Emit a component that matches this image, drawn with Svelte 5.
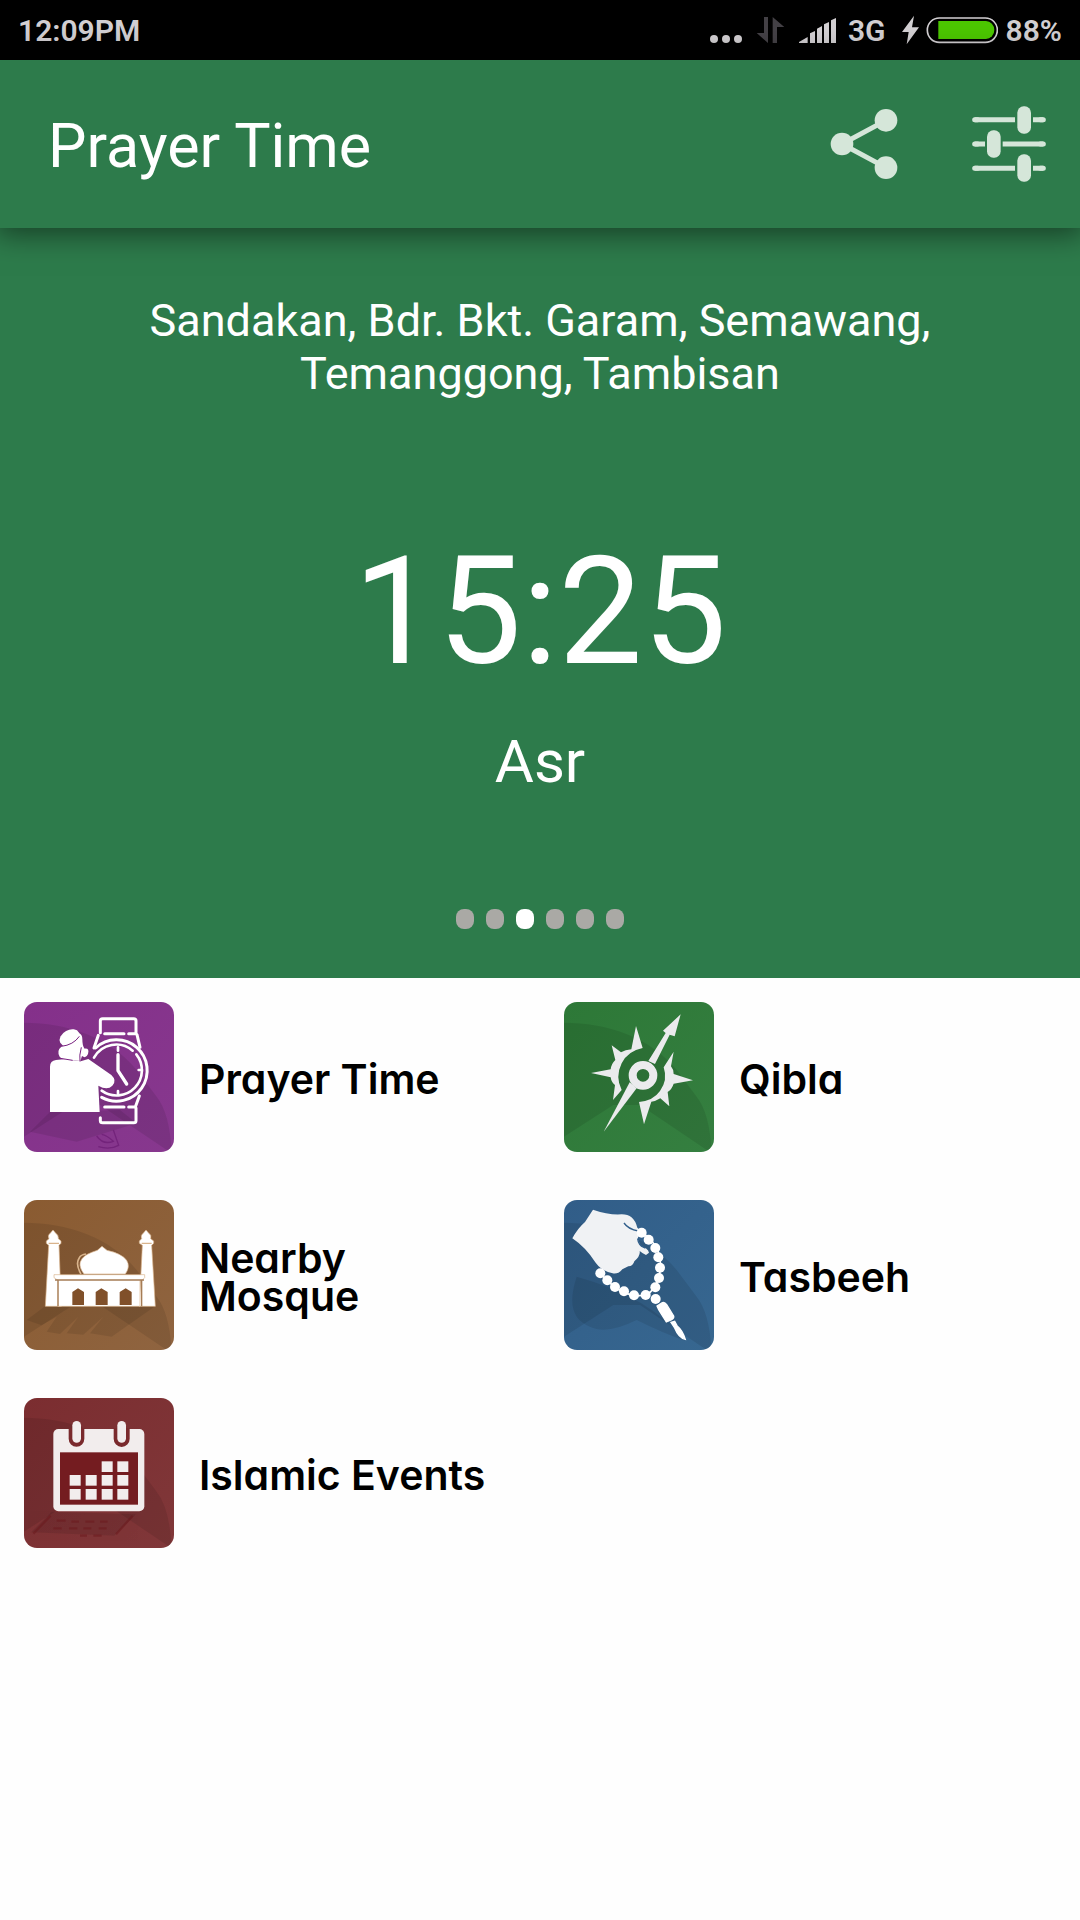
<script>
  const location = "Sandakan, Bdr. Bkt. Garam, Semawang, Temanggong, Tambisan";
  const prayers = ["Imsak", "Dhuhr", "Asr", "Maghrib", "Isha", "Fajr"];
  let current = 2;

  const menu = [
    { id: "prayer", label: "Prayer Time", box: "42 36 450 450" },
    { id: "qibla", label: "Qibla", box: "42 36 450 450" },
    { id: "mosque", label: "Nearby Mosque", box: "42 30 450 450" },
    { id: "tasbeeh", label: "Tasbeeh", box: "42 30 450 450" },
    { id: "events", label: "Islamic Events", box: "42 39 450 450" },
  ];

  // centre points of the beads on the tasbeeh string
  const beads = [
    [275, 128], [296, 149], [316, 174], [325, 202], [330, 233], [327, 264],
    [316, 292], [287, 315], [252, 316], [222, 304], [195, 291], [172, 271],
    [151, 250], [317, 327],
  ];

  // filled days of the calendar
  const days = [
    [275, 229], [322, 229],
    [179, 270], [227, 270], [275, 270], [322, 270],
    [179, 312], [227, 312], [275, 312], [322, 312],
  ];
</script>

<div class="status-bar">
  <span>12:09PM</span>
  <div class="status-right">
    <svg class="network" viewBox="63 0 378 180" aria-hidden="true">
      <g fill="#d3d0d3">
        <circle cx="75" cy="117" r="12" />
        <circle cx="111" cy="117" r="12" />
        <circle cx="147" cy="117" r="12" />
        <path d="M330 129V126L356 111V129Z M363 129V100L378 93V129Z M384 129V86L399 78V129Z M405 129V73L420 66V129Z M426 129V61L441 54V129Z" />
      </g>
      <path fill="#444146" d="M225 51H237V129L203 99H225Z M251 129V51L286 81H264V129Z" />
    </svg>
    <span>3G</span>
    <svg class="battery" viewBox="641 0 288 180" aria-hidden="true">
      <path fill="#d3d0d3" d="M677 47L641 96H661L655 133L692 82H671Z" />
      <rect x="717" y="54" width="210" height="73" rx="36" fill="none" stroke="#d3d0d3" stroke-width="5" />
      <path fill="#4cc700" d="M750 63H893A25 27 0 0 1 893 117H750Z" />
    </svg>
    <span>88%</span>
  </div>
</div>

<header>
  <h1>Prayer Time</h1>
  <div class="actions">
    <button aria-label="Share">
      <svg viewBox="414 324 216 216">
        <path d="M588 361L456 432L588 503" fill="none" stroke="#d5e6d9" stroke-width="15" />
        <g fill="#d5e6d9">
          <circle cx="588" cy="361" r="34" />
          <circle cx="456" cy="432" r="34" />
          <circle cx="588" cy="503" r="34" />
        </g>
      </svg>
    </button>
    <button aria-label="Settings">
      <svg class="wide" viewBox="843 318 222 228">
        <path d="M851 359H972M1026 359H1057M851 432H882M935 432H1057M851 505H972M1026 505H1057" stroke="#d5e6d9" stroke-width="15" />
        <path d="M851 359H860M1048 359H1057M851 432H860M1048 432H1057M851 505H860M1048 505H1057" stroke="#d5e6d9" stroke-width="15" stroke-linecap="round" />
        <g fill="#d5e6d9">
          <rect x="979" y="319" width="41" height="82" rx="19" />
          <rect x="888" y="391" width="41" height="82" rx="19" />
          <rect x="979" y="463" width="41" height="82" rx="19" />
        </g>
      </svg>
    </button>
  </div>
</header>

<section class="hero">
  <p class="location">{location}</p>
  <div class="time">15:25</div>
  <div class="name">Asr</div>
  <div class="dots">
    {#each prayers as prayer, i}
      <button
        class:active={i === current}
        aria-label={prayer}
        on:click={() => {
          current = i;
        }}
      ></button>
    {/each}
  </div>
</section>

<nav>
  {#each menu as item}
    <a href="#{item.id}" class={item.id}>
      <svg class="tile" viewBox={item.box} aria-hidden="true">
        <!-- glossy background -->
        <path class="shade" d="M42 98C170 98 300 140 380 240L440 320Q480 370 485 490L270 345L190 345L42 440Z" />

        {#if item.id === "prayer"}
          <path class="shade" d="M120 366L60 425L200 455L380 400L330 360Z" />
          <g fill="none" stroke="#fff" stroke-width="9" stroke-linecap="round" stroke-linejoin="round">
            <path d="M271 128V92Q271 86 278 86H371Q378 86 378 92V128M284 131H342M356 131H379M265 136L252 174M381 134L390 172" />
            <path d="M271 383V392Q271 398 278 398H371Q378 398 378 392V354M284 351H342M356 351H376L388 318" />
            <path d="M257 174A92 92 0 1 1 275 322" />
            <path d="M252 203A76 76 0 0 1 368 182M379 193A76 76 0 0 1 275 302" stroke-width="8" />
            <path d="M324 172V182M324 303V313M386 240H396" stroke-width="8" />
            <path d="M324 194V242L350 282" stroke-width="10" />
          </g>
          <g fill="#fff">
            <path d="M120 366V230Q120 212 138 210L160 208L188 211L212 214L235 207L304 255Q322 272 307 287Q292 302 265 287L269 366Z" />
            <path d="M154 170Q139 182 149 200Q158 211 180 210L211 213L216 198Q228 207 234 192Q239 174 224 176Q217 169 217 147Q217 132 205 128Z" />
            <ellipse cx="179" cy="143" rx="32" ry="23" transform="rotate(-28 179 143)" />
          </g>
          <path d="M154 169Q190 165 208 139M214 172Q207 198 210 214M151 205L188 211" fill="none" stroke="#792080" stroke-width="3" />
          <path d="M260 438Q280 466 310 454Q290 435 275 433M310 420L326 466Q300 480 265 470" fill="none" stroke="#68186f" stroke-width="4" opacity="0.6" />
        {:else if item.id === "qibla"}
          <g fill="#ebebed">
            <path d="M258 108L278 174Q233 183 215 220Q195 260 215 300L189 330L195 285Q184 277 182 262L123 249L182 238Q184 221 196 210L185 166L213 187Q226 180 244 178Z" />
            <path d="M371 185L363 229Q372 240 371 252L429 271L371 281Q366 297 353 306L358 349L331 325Q317 334 304 335L282 403L267 336Q310 332 330 303Q354 270 341 232Z" />
            <path d="M392 73L374 139L359 134L315 222L295 213L347 129L339 122Z" />
            <path d="M239 277L260 295L161 425Z" />
          </g>
          <circle cx="279" cy="256" r="31" fill="none" stroke="#ebebed" stroke-width="24" />
        {:else if item.id === "mosque"}
          <path class="shade" d="M105 349L50 390L95 406L140 380L110 425L150 432L205 380L170 430L220 434L280 380L240 430L305 440L435 349Z" />
          <g fill="#fff" stroke="#d9b48c" stroke-width="2">
            <path d="M106 349L116 166L109 160V153L117 146Q111 136 122 128L129 120L136 128Q147 136 145 146L153 153V160L147 166L154 349Z" />
            <path d="M388 349L397 166L388 160V153L395 146Q390 136 401 128L408 120L415 128Q426 136 422 146L431 153V160L425 166L436 349Z" />
            <path d="M222 252Q201 226 216 206Q226 192 262 181L276 169L291 181Q337 191 350 211Q362 230 346 252Z" />
            <path d="M132 254H404V263L396 271H390V349H144V271L132 263Z" />
          </g>
          <path d="M213 252Q195 222 208 203Q213 194 228 192" fill="none" stroke="#d9b48c" stroke-width="5" />
          <path d="M116 160H147M395 160H425" stroke="#d9b48c" stroke-width="4" />
          <path d="M144 272V349M395 272V349M135 270H402" stroke="#a57c55" stroke-width="4" />
          <path d="M187 345V306L204 295L222 306V345ZM257 345V306L274 295L293 306V345ZM329 345V306L347 295L365 306V345Z" fill="#80502a" />
        {:else if item.id === "tasbeeh"}
          <path class="shade" d="M80 260Q40 380 120 410Q170 435 260 390Q340 430 405 452Q300 320 80 260Z" />
          <path d="M276 128Q345 174 328 255Q319 300 287 315Q220 329 151 250" fill="none" stroke="#fff" stroke-width="5" />
          <path fill="#f0f2f4" d="M129 59Q177 76 215 73Q252 73 262 113L271 121L263 146L272 169Q294 174 297 188L288 195Q277 190 269 183Q272 198 253 214Q249 229 235 229L217 238Q205 253 188 250Q155 243 137 218Q106 171 67 145Q83 115 105 96Z" />
          <path d="M222 99Q235 118 265 123M263 146Q265 168 286 174" fill="none" stroke="#315f8b" stroke-width="4" />
          {#each beads as [x, y]}
            <circle cx={x} cy={y} r="15" fill="#fff" />
          {/each}
          <path fill="#fff" d="M321 348L337 338Q344 335 350 344L371 378Q373 385 365 389L349 396L326 359ZM363 397L374 394L381 407Q398 421 406 448Q386 444 374 414Z" stroke="#fff" stroke-width="4" />
        {:else}
          <path class="shade" d="M125 380L63 442L313 452L378 388Z" />
          <path d="M122 392L70 446M368 392L318 448M140 407H167M184 410H207M226 410H253M270 410H293M130 430H155M177 430H202M220 430H244M266 430H290M210 452H231M250 452H275" stroke="#6a171b" stroke-width="7" opacity="0.5" />
          <rect x="130" y="132" width="273" height="247" rx="15" fill="#f2eded" />
          <rect x="150" y="202" width="234" height="157" fill="#741c20" />
          <path d="M176 130H223V161A23 24 0 0 1 176 161ZM311 130H359V161A23 24 0 0 1 311 161Z" fill="#7a2a2d" />
          <rect x="187" y="108" width="26" height="65" rx="13" fill="#f2eded" />
          <rect x="322" y="108" width="26" height="65" rx="13" fill="#f2eded" />
          {#each days as [x, y]}
            <rect {x} {y} width="33" height="32" fill="#f2eded" />
          {/each}
        {/if}
      </svg>
      <span>{item.label}</span>
    </a>
  {/each}
</nav>

<style>
  :global(body) {
    background-color: #fefefe;
    font-family: Roboto, "Liberation Sans", sans-serif;
  }
  button {
    border: none;
    padding: 0;
    background: none;
    cursor: pointer;
  }
  svg {
    display: block;
    flex-shrink: 0;
  }
  .status-bar {
    display: flex;
    justify-content: space-between;
    height: 60px;
    padding: 0 18px;
    background-color: #000;
    color: #d3d0d3;
    font-size: 30px;
    font-weight: 600;
    line-height: 62px;
  }
  .status-right {
    display: flex;
    gap: 8px;
  }
  .network {
    width: 126px;
    height: 60px;
    margin-right: 4px;
  }
  .battery {
    width: 96px;
    height: 60px;
    margin-left: 8px;
  }
  header {
    position: relative;
    display: flex;
    align-items: center;
    justify-content: space-between;
    height: 168px;
    padding: 0 34px 0 48px;
    background-color: #2d7b4b;
    box-shadow: 0 2px 28px 4px rgba(0, 0, 0, 0.5);
    color: #fff;
  }
  h1 {
    margin: 0;
    padding-top: 4px;
    font-size: 61px;
    font-weight: 400;
    line-height: 72px;
  }
  .actions {
    display: flex;
    align-items: center;
    gap: 72px;
  }
  .actions svg {
    width: 72px;
    height: 72px;
  }
  .actions svg.wide {
    width: 74px;
    height: 76px;
  }
  .hero {
    display: flex;
    flex-direction: column;
    align-items: center;
    padding: 66px 120px 49px;
    background-color: #2d7b4b;
    color: #fff;
    text-align: center;
  }
  .location {
    margin: 0;
    font-size: 45px;
    line-height: 53px;
  }
  .time {
    margin-top: 124px;
    font-size: 150px;
    line-height: 176px;
  }
  .name {
    margin-top: 26px;
    font-size: 60px;
    line-height: 72px;
  }
  .dots {
    display: flex;
    gap: 12px;
    margin-top: 111px;
  }
  .dots button {
    width: 18px;
    height: 20px;
    border-radius: 8px;
    background-color: #aaa9a5;
  }
  .dots button.active {
    background-color: #fff;
  }
  nav {
    display: grid;
    grid-template-columns: 1fr 1fr;
    row-gap: 48px;
    padding: 24px 0;
  }
  nav a {
    display: flex;
    align-items: center;
    gap: 25px;
    padding: 0 24px;
    color: #000;
    font-family: Inter, Lato, sans-serif;
    font-size: 41px;
    font-weight: 600;
    font-feature-settings: "cv11";
    line-height: 38px;
    text-decoration: none;
  }
  nav span {
    padding-top: 4px;
  }
  .mosque span {
    max-width: 200px;
  }
  .tile {
    width: 150px;
    height: 150px;
    border-radius: 13px;
  }
  .shade {
    fill: rgba(0, 0, 0, 0.09);
  }
  .prayer .tile {
    background: linear-gradient(135deg, #84308a, #87388e);
  }
  .qibla .tile {
    background: linear-gradient(135deg, #2d7837, #357f40);
  }
  .mosque .tile {
    background: linear-gradient(135deg, #8a5b31, #8f6440);
  }
  .tasbeeh .tile {
    background: linear-gradient(135deg, #315d88, #376790);
  }
  .events .tile {
    background: linear-gradient(135deg, #7b2d30, #803739);
  }
</style>
